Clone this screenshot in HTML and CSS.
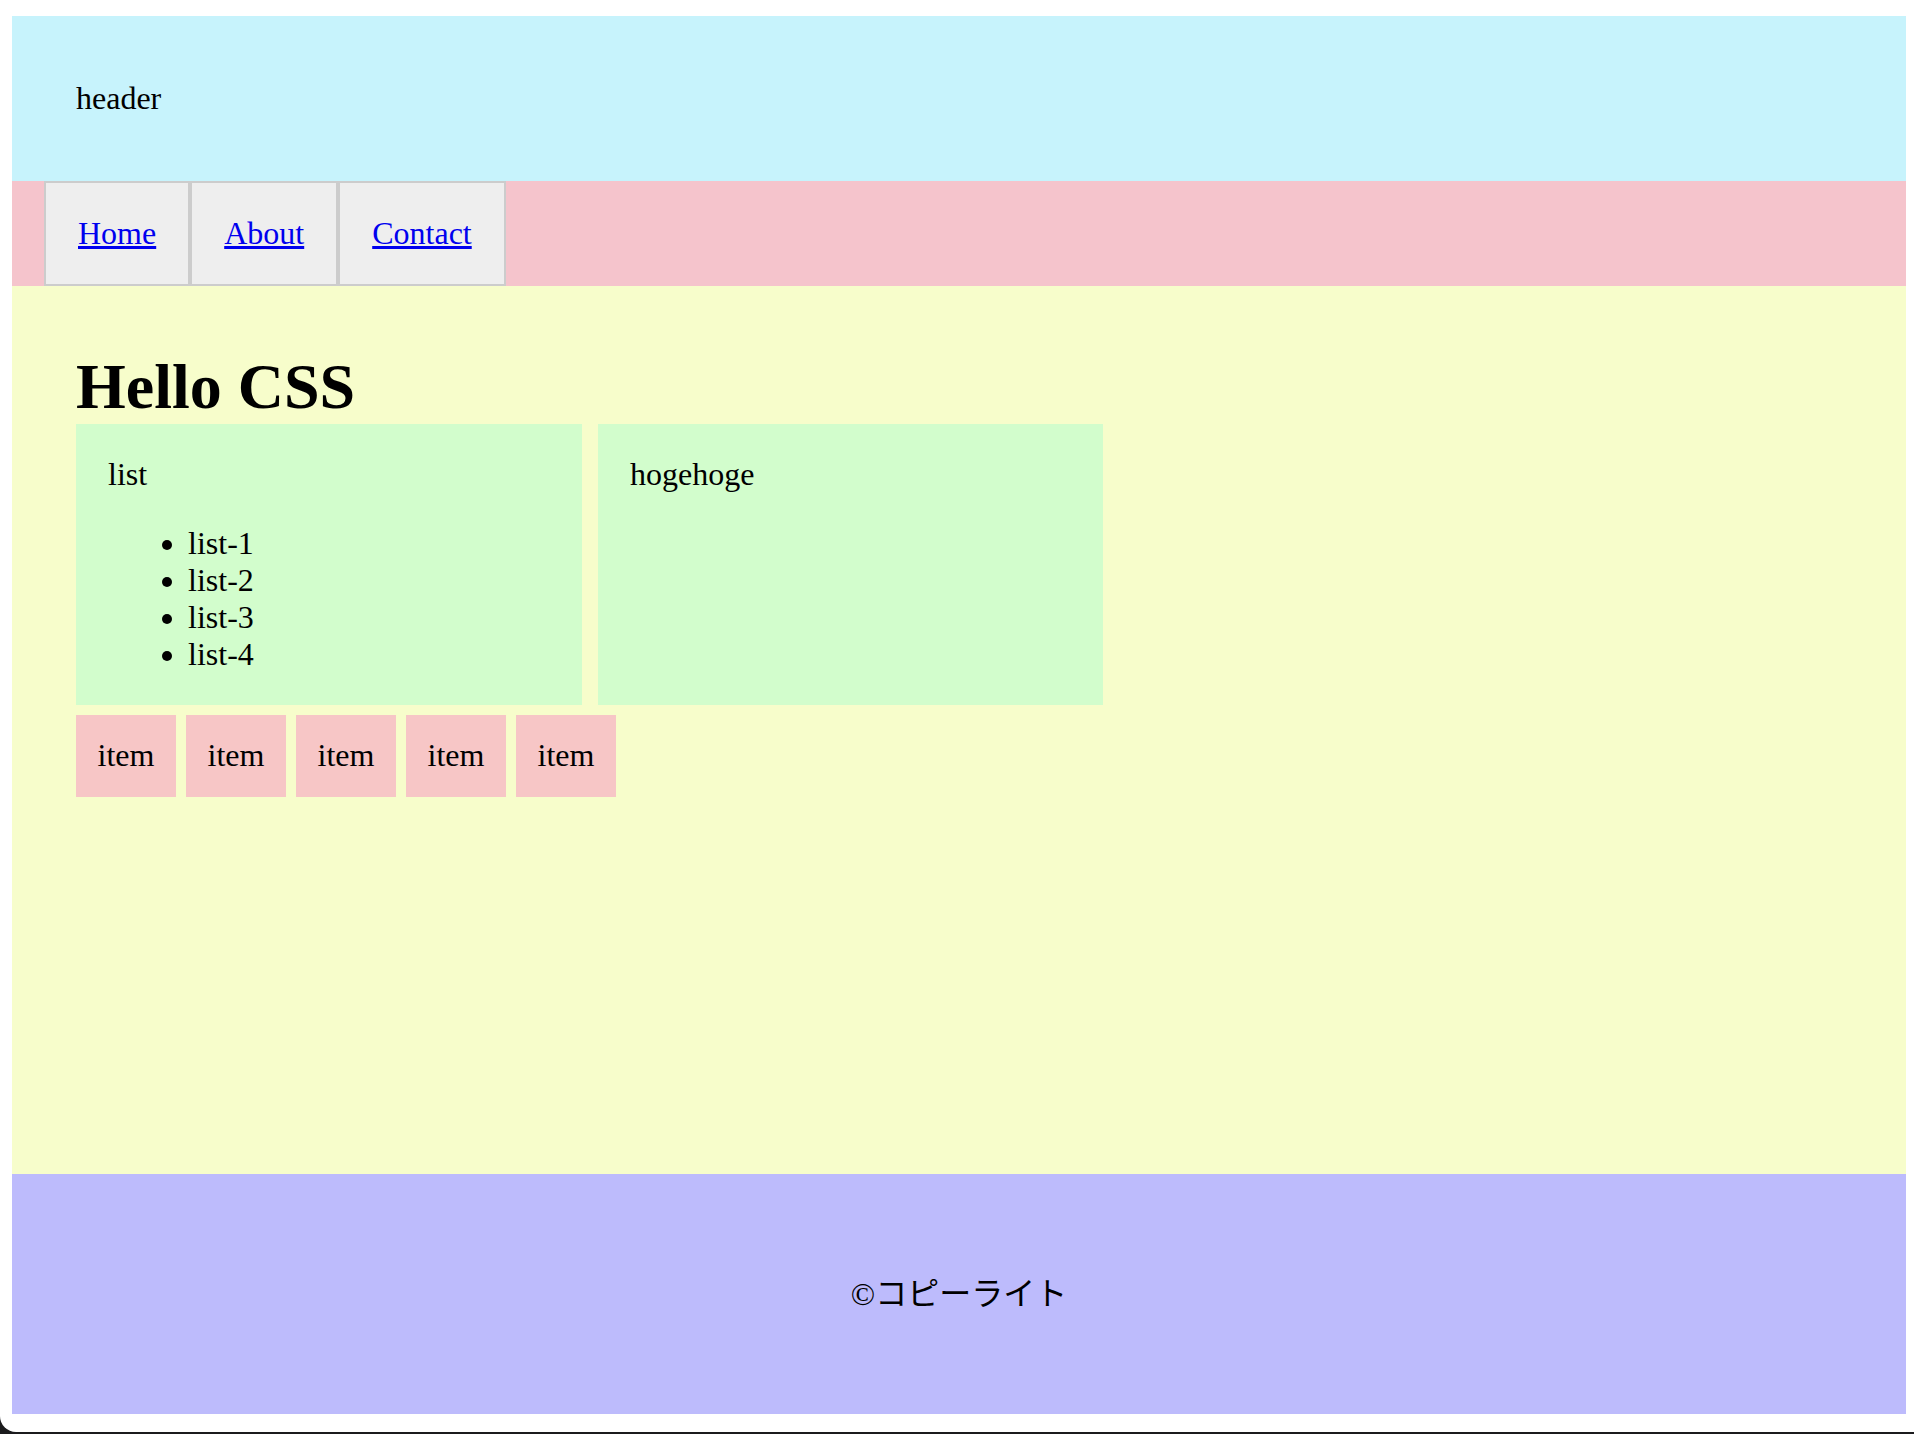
FILE: index.html
```html
<!DOCTYPE html>
<html lang="ja">
<head>
<meta charset="utf-8">
<title>Hello CSS</title>
<link rel="stylesheet" href="styles.css">
</head>
<body>
<div class="window">
  <header class="site-header">header</header>
  <nav class="site-nav">
    <ul class="nav-list">
      <li class="nav-item"><a href="#">Home</a></li>
      <li class="nav-item"><a href="#">About</a></li>
      <li class="nav-item"><a href="#">Contact</a></li>
    </ul>
  </nav>
  <main class="site-main">
    <h1 class="title">Hello CSS</h1>
    <div class="cards">
      <div class="card">
        <p class="card-text">list</p>
        <ul class="card-list">
          <li>list-1</li>
          <li>list-2</li>
          <li>list-3</li>
          <li>list-4</li>
        </ul>
      </div>
      <div class="card card-second">
        <p class="card-text">hogehoge</p>
      </div>
    </div>
    <div class="items">
      <div class="item">item</div>
      <div class="item">item</div>
      <div class="item">item</div>
      <div class="item">item</div>
      <div class="item">item</div>
    </div>
  </main>
  <footer class="site-footer">©コピーライト</footer>
</div>
</body>
</html>
```
FILE: styles.css
```css
html, body {
  margin: 0;
  padding: 0;
  background: #1b1b1d;
}

body {
  font-family: "Liberation Serif", "Noto Sans CJK JP", serif;
  font-size: 32px;
  color: #000;
}

.window {
  background: #ffffff;
  padding: 16px 8px 18px 12px;
  border-bottom-left-radius: 16px;
  height: 1432px;
  box-sizing: border-box;
}

.site-header {
  background: #c7f3fc;
  padding: 64px;
  line-height: 36.8px;
}

.site-nav {
  background: #f5c4cc;
}

.nav-list {
  display: flex;
  margin: 0;
  padding: 0 0 0 32px;
  list-style: none;
}

.nav-item {
  background: #eeeeee;
  border: 2px solid #cccccc;
  padding: 32px;
  line-height: 36.8px;
}

.nav-item a {
  color: #0000ee;
  text-decoration: underline;
}

.site-main {
  background: #f7fdcb;
  padding: 64px;
  height: 888.4px;
  box-sizing: border-box;
}

.title {
  margin: 0;
  font-size: 64px;
  font-weight: bold;
  line-height: 73.6px;
}

.cards {
  display: flex;
  gap: 16px;
  margin-top: 1px;
}

.card {
  width: 506px;
  box-sizing: border-box;
  background: #d2fdcc;
  padding: 32px;
  line-height: 36.9px;
}

.card-second {
  width: 505px;
}

.card-text {
  margin: 0;
}

.card-list {
  margin: 32px 0 0;
  padding-left: 80px;
}

.items {
  display: flex;
  gap: 10px;
  margin-top: 10px;
}

.item {
  width: 100px;
  height: 82px;
  box-sizing: border-box;
  padding-top: 22.5px;
  background: #f7c6c6;
  text-align: center;
  line-height: 36.8px;
}

.site-footer {
  background: #bdbbfc;
  height: 240px;
  display: flex;
  align-items: center;
  justify-content: center;
  line-height: 36.8px;
}
```
